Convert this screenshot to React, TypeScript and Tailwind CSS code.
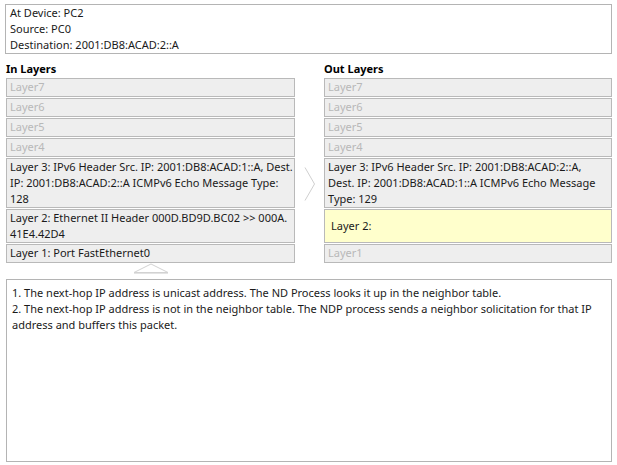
const inLayers = [
  { text: "Layer7", active: false },
  { text: "Layer6", active: false },
  { text: "Layer5", active: false },
  { text: "Layer4", active: false },
  { text: "Layer 3: IPv6 Header Src. IP: 2001:DB8:ACAD:1::A, Dest. IP: 2001:DB8:ACAD:2::A ICMPv6 Echo Message Type: 128", active: true },
  { text: "Layer 2: Ethernet II Header 000D.BD9D.BC02 >> 000A. 41E4.42D4", active: true },
  { text: "Layer 1: Port FastEthernet0", active: true },
]

const outLayers = [
  { text: "Layer7", active: false },
  { text: "Layer6", active: false },
  { text: "Layer5", active: false },
  { text: "Layer4", active: false },
  { text: "Layer 3: IPv6 Header Src. IP: 2001:DB8:ACAD:2::A, Dest. IP: 2001:DB8:ACAD:1::A ICMPv6 Echo Message Type: 129", active: true },
  { text: "Layer 2:", active: true, highlight: true },
  { text: "Layer1", active: false },
]

type Layer = { text: string; active: boolean; highlight?: boolean }

function LayerBox({ layer, padRight }: { layer: Layer; padRight: string }) {
  if (layer.highlight) {
    return (
      <div className="h-[34px] flex items-center border border-[#b9b9b9] bg-[#ffffcc] pl-[6px] text-[#1a1a1a]">
        {layer.text}
      </div>
    )
  }
  return (
    <div
      className={`min-h-[19px] border border-[#b9b9b9] bg-[#eeeeee] pl-[3px] ${padRight} ${
        layer.active ? "text-[#1a1a1a]" : "text-[#b8b8b8]"
      }`}
    >
      {layer.text}
    </div>
  )
}

function LayerColumn({
  title,
  layers,
  width,
  padRight,
}: {
  title: string
  layers: Layer[]
  width: string
  padRight: string
}) {
  return (
    <div className={`flex flex-col ${width}`}>
      <div className="h-[16px] font-bold text-black">{title}</div>
      <div className="flex flex-col gap-[1px] mt-[1px]">
        {layers.map((l, i) => (
          <LayerBox key={i} layer={l} padRight={padRight} />
        ))}
      </div>
    </div>
  )
}

export default function App() {
  return (
    <div
      className="w-[617px] h-[465px] bg-white text-[11px] leading-[16px] text-[#1a1a1a] overflow-hidden"
      style={{ fontFamily: '"Noto Sans", "Open Sans", sans-serif' }}
    >
      <div className="pt-[4px] pl-[5px]">
        {/* Device info */}
        <div className="w-[607px] border border-[#b4b4b4] pl-[4px]">
          <div>At Device: PC2</div>
          <div>Source: PC0</div>
          <div>Destination: 2001:DB8:ACAD:2::A</div>
        </div>

        {/* Layers */}
        <div className="flex mt-[7px] ml-[1px]">
          <LayerColumn title="In Layers" layers={inLayers} width="w-[289px]" padRight="pr-0" />
          <div className="w-[29px] flex justify-center pt-[106px]">
            <svg width="12" height="34" viewBox="0 0 12 34">
              <polyline points="1,0.5 10.5,17 1,33.5" fill="none" stroke="#cfcfcf" strokeWidth="1" />
            </svg>
          </div>
          <LayerColumn title="Out Layers" layers={outLayers} width="w-[288px]" padRight="pr-[6px]" />
        </div>

        <div className="w-[289px] ml-[1px] flex justify-center h-[11px]">
          <svg width="36" height="11" viewBox="0 0 36 11">
            <polygon points="1,9.5 18,1 35,9.5" fill="#ffffff" stroke="#d2d2d2" strokeWidth="1" />
            <line x1="1" y1="10.5" x2="35" y2="10.5" stroke="#e4e4e4" strokeWidth="1" />
          </svg>
        </div>

        {/* Process description */}
        <div className="w-[606px] h-[183px] ml-[1px] mt-[5px] border border-[#b4b4b4] pl-[5px] pt-[5px]">
          <div>1. The next-hop IP address is unicast address. The ND Process looks it up in the neighbor table.</div>
          <div>
            2. The next-hop IP address is not in the neighbor table. The NDP process sends a neighbor solicitation for that IP address and buffers this packet.
          </div>
        </div>
      </div>
    </div>
  )
}
